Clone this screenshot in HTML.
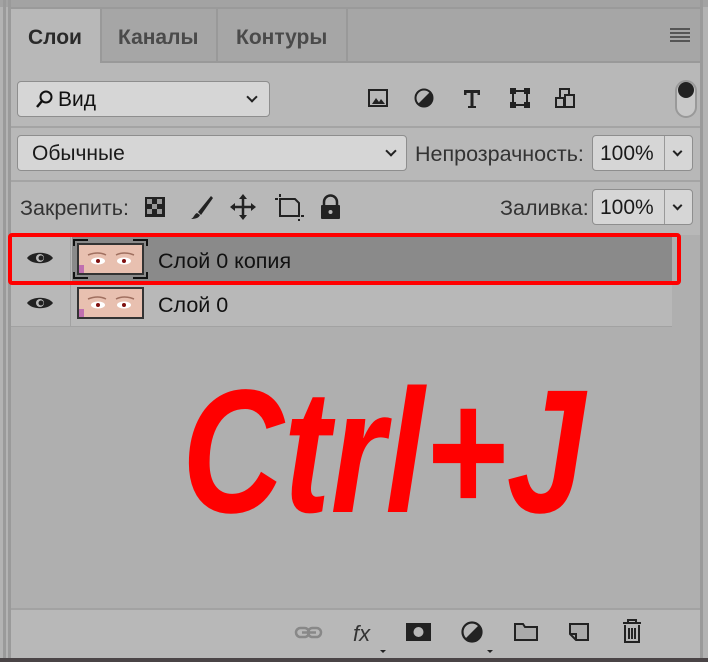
<!DOCTYPE html>
<html><head><meta charset="utf-8"><style>
*{margin:0;padding:0;box-sizing:border-box}
body{width:708px;height:662px;background:#b3b3b3;position:relative;overflow:hidden;font-family:"Liberation Sans",sans-serif;color:#1a1a1a}
.a{position:absolute}
.box{position:absolute;background:#d6d6d6;border:1px solid #8e8e8e;border-radius:4px}
.t{position:absolute;font-size:21px;white-space:nowrap}
.chev{position:absolute;width:8px;height:8px;border-right:2px solid #222;border-bottom:2px solid #222;transform:rotate(45deg)}
</style></head><body>
<div class="a" style="left:0;top:0;width:708px;height:7px;background:#a3a3a3"></div>
<div class="a" style="left:3px;top:0;width:3px;height:662px;background:#9a9a9a"></div>
<div class="a" style="left:8px;top:0;width:3px;height:662px;background:#9a9a9a"></div>
<div class="a" style="left:700px;top:0;width:3px;height:662px;background:#9a9a9a"></div>
<div class="a" style="left:0;top:658px;width:708px;height:4px;background:#4a4446"></div>
<!-- tab bar -->
<div class="a" style="left:11px;top:7px;width:689px;height:56px;background:#a6a6a6;border-top:2px solid #9a9a9a"></div>
<div class="a" style="left:11px;top:9px;width:89px;height:56px;background:#b8b8b8"></div>
<div class="a" style="left:100px;top:9px;width:2px;height:53px;background:#999"></div>
<div class="a" style="left:216px;top:9px;width:2px;height:53px;background:#999"></div>
<div class="a" style="left:346px;top:9px;width:2px;height:53px;background:#999"></div>
<div class="a" style="left:11px;top:61px;width:689px;height:2px;background:#999"></div>
<div class="a" style="left:11px;top:61px;width:89px;height:3px;background:#b8b8b8"></div>
<div class="t" style="left:28px;top:26px;font-weight:bold;color:#2a2a2a">Слои</div>
<div class="t" style="left:118px;top:26px;font-weight:bold;color:#4a4a4a">Каналы</div>
<div class="t" style="left:236px;top:26px;font-weight:bold;color:#4a4a4a">Контуры</div>
<div class="a" style="left:670px;top:28px;width:20px;height:14px;background:repeating-linear-gradient(#555 0 2px,transparent 2px 4px)"></div>
<!-- body -->
<div class="a" style="left:11px;top:63px;width:689px;height:272px;background:#b8b8b8"></div>
<div class="a" style="left:11px;top:126px;width:689px;height:2px;background:#a4a4a4"></div>
<div class="a" style="left:11px;top:180px;width:689px;height:2px;background:#a4a4a4"></div>
<div class="box" style="left:17px;top:81px;width:253px;height:36px"></div>
<svg class="a" style="left:34px;top:89px" width="22" height="22" viewBox="0 0 22 22"><circle cx="12" cy="8" r="5.5" fill="none" stroke="#111" stroke-width="2"/><path d="M8 12L3 18" stroke="#111" stroke-width="2.5"/></svg>
<div class="t" style="left:58px;top:88px;color:#111">Вид</div>
<div class="chev" style="left:248px;top:93px"></div>
<!-- filter icons -->
<svg class="a" style="left:364px;top:86px" width="230" height="26" viewBox="0 0 230 26">
<rect x="5" y="4" width="18" height="16" fill="none" stroke="#222" stroke-width="2"/><path d="M8 18l4-6 3 4 2-3 4 5z" fill="#222"/>
<circle cx="60" cy="12" r="8.5" fill="none" stroke="#222" stroke-width="2"/><path d="M66 6A8.5 8.5 0 0 1 54 18z" fill="#222"/>
<path d="M100 4h16v5h-2.5v-2h-4v13h2.5v2h-8v-2h2.5v-13h-4v2h-2.5z" fill="#222"/>
<rect x="149" y="5" width="14" height="14" fill="none" stroke="#222" stroke-width="2"/><rect x="146" y="2" width="6" height="6" fill="#222"/><rect x="160" y="2" width="6" height="6" fill="#222"/><rect x="146" y="16" width="6" height="6" fill="#222"/><rect x="160" y="16" width="6" height="6" fill="#222"/>
<rect x="196" y="3" width="9" height="12" fill="none" stroke="#222" stroke-width="2"/><rect x="201" y="9" width="9" height="12" fill="#b8b8b8" stroke="#222" stroke-width="2"/><rect x="192" y="12" width="8" height="9" fill="#b8b8b8" stroke="#222" stroke-width="2"/>
</svg>
<div class="a" style="left:675px;top:80px;width:22px;height:38px;border:2px solid #999;border-radius:11px;background:#c8c8c8"></div>
<div class="a" style="left:678px;top:82px;width:16px;height:16px;border-radius:50%;background:#222"></div>
<!-- blend row -->
<div class="box" style="left:17px;top:135px;width:390px;height:36px"></div>
<div class="t" style="left:32px;top:142px">Обычные</div>
<div class="chev" style="left:387px;top:147px"></div>
<div class="t" style="left:415px;top:142px;color:#333;font-size:21.5px">Непрозрачность:</div>
<div class="box" style="left:592px;top:135px;width:101px;height:36px"></div>
<div class="a" style="left:664px;top:136px;width:1px;height:34px;background:#999"></div>
<div class="t" style="left:600px;top:142px">100%</div>
<div class="chev" style="left:674px;top:148px;width:7px;height:7px"></div>
<!-- lock row -->
<div class="t" style="left:20px;top:196px;color:#333;font-size:21.5px">Закрепить:</div>
<svg class="a" style="left:143px;top:192px" width="210" height="30" viewBox="0 0 210 30">
<rect x="2" y="5" width="20" height="20" fill="#222"/><rect x="4" y="7" width="5" height="5" fill="#999"/><rect x="14" y="7" width="5" height="5" fill="#999"/><rect x="9" y="12" width="5" height="5" fill="#999"/><rect x="4" y="17" width="5" height="5" fill="#999"/><rect x="14" y="17" width="5" height="5" fill="#999"/>
<path d="M68 4L55 20l3 3 12-17z" fill="#222"/><path d="M54 21c-3 1-3 5-6 6 4 0 8-1 9-4z" fill="#222"/>
<path d="M100 4v22M89 15h22" stroke="#222" stroke-width="2.5"/><path d="M100 2l-4 5h8zM100 28l-4-5h8zM87 15l5-4v8zM113 15l-5-4v8z" fill="#222"/>
<path d="M137 7h15l4 4v13h-19z" fill="none" stroke="#222" stroke-width="2"/><path d="M132 7h3M158 24h3M137 2v3M156 27v2" stroke="#222" stroke-width="2"/>
<rect x="178" y="13" width="19" height="14" rx="1" fill="#222"/><path d="M181 14v-4a6.5 6.5 0 0 1 13 0v4" fill="none" stroke="#222" stroke-width="2.5"/><circle cx="187.5" cy="20" r="2" fill="#b8b8b8"/>
</svg>
<div class="t" style="left:500px;top:196px;color:#333;font-size:21.5px">Заливка:</div>
<div class="box" style="left:592px;top:189px;width:101px;height:36px"></div>
<div class="a" style="left:664px;top:190px;width:1px;height:34px;background:#999"></div>
<div class="t" style="left:600px;top:196px">100%</div>
<div class="chev" style="left:674px;top:202px;width:7px;height:7px"></div>
<!-- layers area -->
<div class="a" style="left:11px;top:235px;width:689px;height:373px;background:#afafaf"></div>
<div class="a" style="left:11px;top:237px;width:661px;height:90px;background:#b8b8b8"></div>
<div class="a" style="left:70px;top:237px;width:1px;height:90px;background:#a2a2a2"></div>
<div class="a" style="left:72px;top:237px;width:600px;height:46px;background:#8a8a8a"></div>
<div class="a" style="left:11px;top:326px;width:661px;height:1px;background:#a2a2a2"></div>
<div class="a" style="left:8px;top:233px;width:673px;height:52px;border:4px solid #f00;border-radius:4px"></div>
<svg class="a" style="left:24px;top:248px" width="32" height="20" viewBox="0 0 32 20"><path d="M3 10C8 3 24 3 29 10C24 17 8 17 3 10z" fill="#222"/><circle cx="16" cy="10" r="4" fill="#b8b8b8"/><circle cx="17" cy="10" r="2.5" fill="#222"/></svg>
<svg class="a" style="left:24px;top:293px" width="32" height="20" viewBox="0 0 32 20"><path d="M3 10C8 3 24 3 29 10C24 17 8 17 3 10z" fill="#222"/><circle cx="16" cy="10" r="4" fill="#b8b8b8"/><circle cx="17" cy="10" r="2.5" fill="#222"/></svg>
<svg class="a" style="left:73px;top:239px" width="75" height="40" viewBox="0 0 75 40">
<path d="M1 7V1h14M60 1h14v6M1 33v6h14M60 39h14v-6" fill="none" stroke="#111" stroke-width="2"/>
<rect x="4" y="4" width="67" height="32" fill="#333"/><rect x="6" y="6" width="63" height="28" fill="#e8c0b0"/>
<rect x="6" y="26" width="5" height="8" fill="#c070b0"/>
<ellipse cx="25" cy="22" rx="7" ry="3.5" fill="#fff"/><circle cx="25" cy="22" r="2" fill="#801010"/>
<ellipse cx="51" cy="22" rx="7" ry="3.5" fill="#fff"/><circle cx="51" cy="22" r="2" fill="#801010"/>
<path d="M15 16q10-4 18 0M43 16q8-4 18 0" stroke="#a07060" stroke-width="1.5" fill="none"/></svg>
<svg class="a" style="left:77px;top:287px" width="67" height="32" viewBox="0 0 67 32">
<rect x="0" y="0" width="67" height="32" fill="#333"/><rect x="2" y="2" width="63" height="28" fill="#e8c0b0"/>
<rect x="2" y="22" width="5" height="8" fill="#c070b0"/>
<ellipse cx="21" cy="18" rx="7" ry="3.5" fill="#fff"/><circle cx="21" cy="18" r="2" fill="#801010"/>
<ellipse cx="47" cy="18" rx="7" ry="3.5" fill="#fff"/><circle cx="47" cy="18" r="2" fill="#801010"/>
<path d="M11 12q10-4 18 0M39 12q8-4 18 0" stroke="#a07060" stroke-width="1.5" fill="none"/></svg>
<div class="t" style="left:158px;top:249px;color:#111;font-size:21.5px">Слой 0 копия</div>
<div class="t" style="left:158px;top:293px;color:#111;font-size:21.5px">Слой 0</div>
<div class="a" style="left:182px;top:352px;font-size:176px;font-weight:bold;font-style:italic;color:#f00;line-height:200px;transform:scaleX(0.8);transform-origin:0 0;white-space:nowrap">Ctrl+J</div>
<!-- bottom bar -->
<div class="a" style="left:11px;top:608px;width:689px;height:2px;background:#a2a2a2"></div>
<div class="a" style="left:11px;top:610px;width:689px;height:48px;background:#b8b8b8"></div>
<svg class="a" style="left:290px;top:615px" width="370" height="40" viewBox="0 0 370 40">
<rect x="6" y="13" width="13" height="9" rx="4.5" fill="none" stroke="#888" stroke-width="2.5"/><rect x="18" y="13" width="13" height="9" rx="4.5" fill="none" stroke="#888" stroke-width="2.5"/><path d="M12 17.5h14" stroke="#888" stroke-width="2.5"/>
<text x="63" y="26" font-family="Liberation Sans" font-style="italic" font-size="22" fill="#333">fx</text>
<path d="M90 35h6l-3 3z" fill="#222"/>
<rect x="116" y="8" width="25" height="18" fill="#222"/><circle cx="128.5" cy="17" r="5" fill="#b8b8b8"/>
<circle cx="182" cy="17" r="9.5" fill="none" stroke="#222" stroke-width="2.2"/><path d="M189 10A9.5 9.5 0 0 1 175 24z" fill="#222"/>
<path d="M197 35h6l-3 3z" fill="#222"/>
<path d="M225 9h8l2 3h12v13h-22z" fill="#aaa" stroke="#222" stroke-width="2"/>
<path d="M280 9h18v16h-12l-6-6z" fill="#aaa" stroke="#222" stroke-width="2"/><path d="M280 19h6v6" fill="none" stroke="#222" stroke-width="2"/>
<path d="M333 8h18M338 8v-3h8v3M335 10v17h14v-17M339 13v11M342 13v11M345 13v11" fill="none" stroke="#222" stroke-width="2"/>
</svg>
</body></html>
